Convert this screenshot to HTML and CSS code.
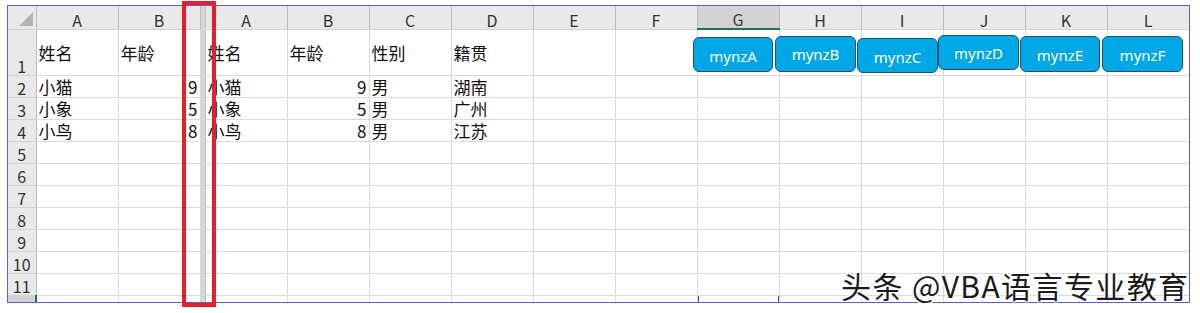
FILE: index.html
```html
<!DOCTYPE html>
<html lang="zh-CN">
<head>
    <meta charset="UTF-8">
    <title>工作表 - 拆分窗格</title>
    <link rel="stylesheet" href="styles.css">
</head>
<body>
    <div class="frame">
        <table class="sheet">
            <colgroup>
                <col class="c-head">
                <col class="c-col"><col class="c-col">
                <col class="c-split">
                <col class="c-col"><col class="c-col"><col class="c-col"><col class="c-col">
                <col class="c-col"><col class="c-col"><col class="c-col"><col class="c-col">
                <col class="c-col"><col class="c-col"><col class="c-col"><col class="c-col">
            </colgroup>
            <tr class="letters">
                <th class="corner"><span class="tri"></span></th>
                <th>A</th><th>B</th><th class="split"></th>
                <th>A</th><th>B</th><th>C</th><th>D</th><th>E</th><th>F</th>
                <th class="sel">G</th><th>H</th><th>I</th><th>J</th><th>K</th><th>L</th>
            </tr>
            <tr class="r-tall">
                <th>1</th>
                <td>姓名</td><td>年龄</td><td class="split"></td>
                <td>姓名</td><td>年龄</td><td>性别</td><td>籍贯</td><td></td><td></td>
                <td></td><td></td><td></td><td></td><td></td><td></td>
            </tr>
            <tr>
                <th>2</th>
                <td>小猫</td><td class="num">9</td><td class="split"></td>
                <td>小猫</td><td class="num">9</td><td>男</td><td>湖南</td><td></td><td></td>
                <td></td><td></td><td></td><td></td><td></td><td></td>
            </tr>
            <tr>
                <th>3</th>
                <td>小象</td><td class="num">5</td><td class="split"></td>
                <td>小象</td><td class="num">5</td><td>男</td><td>广州</td><td></td><td></td>
                <td></td><td></td><td></td><td></td><td></td><td></td>
            </tr>
            <tr>
                <th>4</th>
                <td>小鸟</td><td class="num">8</td><td class="split"></td>
                <td>小鸟</td><td class="num">8</td><td>男</td><td>江苏</td><td></td><td></td>
                <td></td><td></td><td></td><td></td><td></td><td></td>
            </tr>
            <tr><th>5</th><td></td><td></td><td class="split"></td><td></td><td></td><td></td><td></td><td></td><td></td><td></td><td></td><td></td><td></td><td></td><td></td></tr>
            <tr><th>6</th><td></td><td></td><td class="split"></td><td></td><td></td><td></td><td></td><td></td><td></td><td></td><td></td><td></td><td></td><td></td><td></td></tr>
            <tr><th>7</th><td></td><td></td><td class="split"></td><td></td><td></td><td></td><td></td><td></td><td></td><td></td><td></td><td></td><td></td><td></td><td></td></tr>
            <tr><th>8</th><td></td><td></td><td class="split"></td><td></td><td></td><td></td><td></td><td></td><td></td><td></td><td></td><td></td><td></td><td></td><td></td></tr>
            <tr><th>9</th><td></td><td></td><td class="split"></td><td></td><td></td><td></td><td></td><td></td><td></td><td></td><td></td><td></td><td></td><td></td><td></td></tr>
            <tr><th>10</th><td></td><td></td><td class="split"></td><td></td><td></td><td></td><td></td><td></td><td></td><td></td><td></td><td></td><td></td><td></td><td></td></tr>
            <tr><th>11</th><td></td><td></td><td class="split"></td><td></td><td></td><td></td><td></td><td></td><td></td><td></td><td></td><td></td><td></td><td></td><td></td></tr>
            <tr class="r-cut">
                <th class="sel-row"></th>
                <td></td><td></td><td class="split"></td><td></td><td></td><td></td><td></td><td></td><td></td>
                <td class="active"></td><td></td><td></td><td></td><td></td><td></td>
            </tr>
        </table>

        <!-- shapes floating over the sheet -->
        <div class="shapes">
            <button class="shape b-a">mynzA</button>
            <button class="shape b-b">mynzB</button>
            <button class="shape b-c">mynzC</button>
            <button class="shape b-d">mynzD</button>
            <button class="shape b-e">mynzE</button>
            <button class="shape b-f">mynzF</button>
        </div>
    </div>

    <div class="mark-box"></div>
    <div class="watermark">头条 @VBA语言专业教育</div>
</body>
</html>
```

FILE: styles.css
```css
/* Base styles */
body {
    margin: 0;
    background: #fff;
    font-family: "Noto Sans CJK SC", "Noto Sans", sans-serif;
    color: #111;
}

.frame {
    position: relative;
    margin: 5px 0 0 7px;
    width: 1181px;
    height: 296px;
    border: 1px solid #5c5cd4;
    overflow: hidden;
    background: #fff;
}

.sheet {
    table-layout: fixed;
    border-collapse: collapse;
    width: 1181px;
}

.c-head { width: 28px; }
.c-col { width: 82px; }
.c-split { width: 5px; }

.sheet th,
.sheet td {
    padding: 0 2px;
    height: 21px;
    border-right: 1px solid #dadada;
    border-bottom: 1px solid #dadada;
    font-size: 17px;
    line-height: 19px;
    white-space: nowrap;
}

.sheet td {
    text-align: left;
    vertical-align: middle;
}

.sheet td.num {
    text-align: right;
}

/* column letters */
.letters th {
    height: 22px;
    background: #e9e9e9;
    color: #444;
    font-weight: normal;
    font-size: 17px;
    text-align: center;
    border-right: 1px solid #d2d2d2;
    border-bottom: 1px solid #b9b9b9;
}

.letters th.sel {
    background: #d3d3d3;
    color: #3a3a3a;
    border-bottom: 2px solid #217346;
}

.corner {
    position: relative;
}

.tri {
    position: absolute;
    right: 3px;
    bottom: 3px;
    width: 0;
    height: 0;
    border-left: 14px solid transparent;
    border-bottom: 14px solid #b4b4b4;
}

/* row numbers */
.sheet tr th {
    background: #e9e9e9;
    color: #333;
    font-weight: normal;
    font-size: 16px;
    line-height: 18px;
    text-align: center;
    vertical-align: bottom;
    padding: 0;
    border-right: 1px solid #bdbdbd;
    border-bottom: 1px solid #d2d2d2;
}

.r-tall td,
.r-tall th {
    height: 45px;
}

.sheet th.sel-row {
    background: #d3d3d3;
    border-right: 2px solid #217346;
}

.sheet .split {
    background: #d6d6d6;
    border-right: 1px solid #c4c4c4;
    border-bottom: none;
    padding: 0;
}

.sheet td.active {
    border-top: 1px solid #217346;
    box-shadow: inset 1px 0 0 #217346, inset -1px 0 0 #217346;
}

/* floating shapes */
.shapes {
    position: absolute;
    inset: 0;
    pointer-events: none;
}

.shape {
    position: absolute;
    height: 35px;
    width: 81px;
    padding: 3px 0 0;
    background: #00a7e7;
    border: 1.5px solid #234f78;
    border-radius: 6px;
    color: #fff;
    font-family: "Noto Sans", sans-serif;
    font-size: 15px;
    box-sizing: border-box;
}

.b-a { left: 685px; top: 31px; width: 80px; }
.b-b { left: 767px; top: 30px; height: 36px; padding-top: 0; }
.b-c { left: 849px; top: 32px; }
.b-d { left: 930px; top: 29px; padding-top: 0; }
.b-e { left: 1012px; top: 30px; width: 80px; height: 36px; padding-top: 1px; }
.b-f { left: 1094px; top: 30px; height: 36px; padding-top: 1px; }

/* callout box drawn over the split */
.mark-box {
    position: absolute;
    left: 182px;
    top: 1px;
    width: 26px;
    height: 298px;
    border: 4px solid #e3202b;
}

.watermark {
    position: absolute;
    left: 841px;
    top: 267px;
    font-size: 30px;
    line-height: 36px;
    color: #1b1b1b;
    letter-spacing: 1.4px;
    text-shadow: 1px 1px 0 #fff, -1px -1px 0 #fff, 1px -1px 0 #fff, -1px 1px 0 #fff;
    white-space: nowrap;
}
```
